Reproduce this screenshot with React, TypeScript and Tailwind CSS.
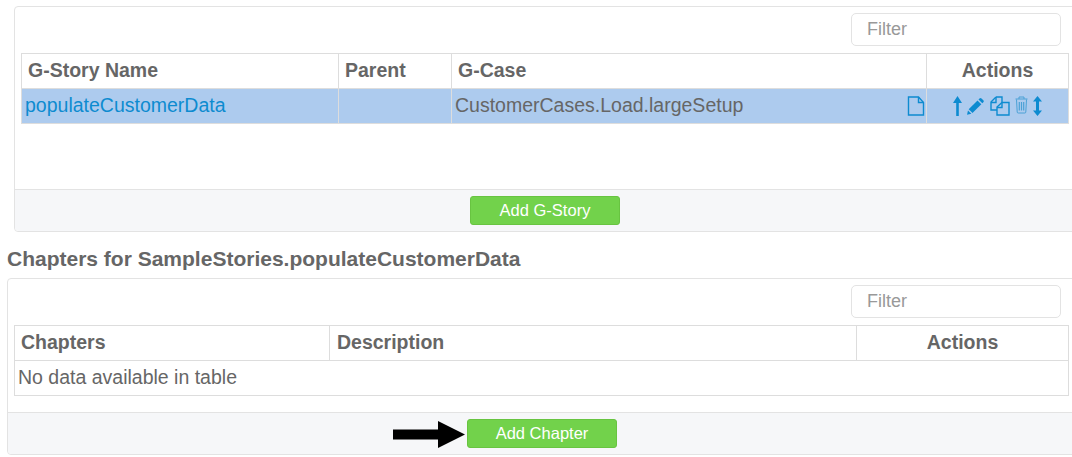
const headClass = 'border border-[#dddddd] px-[6px] pb-[1px] font-bold text-[19.5px] text-[#666666]';
const cellClass = 'border border-[#dddddd] pb-[1px] text-[19.5px]';

const FileIcon = () => (
  <svg width="18" height="20" viewBox="0 0 18 20" fill="none" stroke="#0d8bd0" strokeWidth="1.4">
    <path d="M1.500 1h10l5 5.500v12.500h-15z" />
    <path d="M11.500 1v5.500h5" />
  </svg>
);

const ArrowUpIcon = () => (
  <svg width="9" height="20" viewBox="0 0 9 20" fill="#0d8bd0">
    <path d="M4.500 0l4.500 7h-3.200v13h-2.600v-13h-3.200z" />
  </svg>
);

const PencilIcon = () => (
  <svg width="17" height="18" viewBox="0 0 17 18" fill="#0d8bd0">
    <path d="M11.500 2.500l1-1q1-1 2-0l1.800 1.800q1 1 0 2l-1 1z" />
    <path d="M10.500 3.500l3.800 3.800-8.800 8.800-3.800-3.800z" />
    <path d="M1 13.500l3.300 3.300-4.300 1z" />
  </svg>
);

const CopyIcon = () => (
  <svg width="20" height="20" viewBox="0 0 20 20" fill="none" stroke="#0d8bd0" strokeWidth="1.400">
    <path d="M6 1h6v5M6 1l-5 5v8h6" />
    <path d="M1 6.500h5v-5.500" />
    <path d="M12 6.500h7v12.500h-12v-8z" />
    <path d="M12 6.500v5h-5" />
  </svg>
);

const TrashIcon = () => (
  <svg width="13" height="20" viewBox="0 0 13 20" fill="none" stroke="#4aa1d6" strokeWidth="1">
    <path d="M0.500 3h12M4 3v-2h5v2" />
    <path d="M1.500 3.500l0.700 12.500q0 1 1 1h6.600q1 0 1-1l0.700-12.500" />
    <path d="M4.300 6v8.500M6.500 6v8.500M8.700 6v8.500" strokeWidth="1.200" />
  </svg>
);

const UpDownIcon = () => (
  <svg width="9" height="20" viewBox="0 0 9 20" fill="#0d8bd0">
    <path d="M4.500 0l4.500 5.500h-3v9h3l-4.500 5.500-4.500-5.500h3v-9h-3z" />
  </svg>
);

const FilterBar = () => (
  <div className="flex justify-end pt-[6px] pr-[14px] pb-[7px]">
    <input
      placeholder="Filter"
      className="h-[33px] w-[210px] rounded-[5px] border border-[#e3e3e3] bg-white px-[15px] text-[18px] outline-none placeholder:text-[#999999]"
    />
  </div>
);

const Footer = ({ label, arrow }: { label: string; arrow?: boolean }) => (
  <div className="flex h-[42px] items-center justify-center rounded-b-[4px] border-t border-[#e3e3e3] bg-[#f6f7f9]">
    <button className="relative h-[29px] w-[150px] rounded-[3px] border border-[#68c441] bg-[#72d24b] text-[16.5px] text-white">
      {label}
      {arrow && (
        <svg className="absolute top-[1px] left-[-75px]" width="73" height="27" viewBox="0 0 73 27" fill="#000000">
          <path d="M0 8.500h45v-8.500l27 13.500-27 13.500v-8.500h-45z" />
        </svg>
      )}
    </button>
  </div>
);

export default function App() {
  return (
    <div className="h-[457px] w-[1072px] overflow-hidden bg-white font-['Liberation_Sans',Arial,sans-serif]">
      <div className="pt-[6px] pl-[14px]">
        <div className="mr-[-4px] rounded-[4px] border border-[#e3e3e3]">
          <FilterBar />
          <div className="h-[136px] pl-[6px]">
            <table className="w-[1047px] table-fixed border-collapse">
              <colgroup>
                <col className="w-[317px]" />
                <col className="w-[113px]" />
                <col className="w-[475px]" />
                <col className="w-[142px]" />
              </colgroup>
              <thead>
                <tr className="h-[35px]">
                  <th className={headClass + ' text-left'}>G-Story Name</th>
                  <th className={headClass + ' text-left'}>Parent</th>
                  <th className={headClass + ' text-left'}>G-Case</th>
                  <th className={headClass + ' text-center'}>Actions</th>
                </tr>
              </thead>
              <tbody>
                <tr className="h-[35px] bg-[#adcbee]">
                  <td className={cellClass + ' pl-[3px] text-[#0d8bd0]'}>populateCustomerData</td>
                  <td className={cellClass}></td>
                  <td className={cellClass + ' pr-[1px] pl-[3px] text-[#666666]'}>
                    <div className="flex items-center justify-between">
                      <span>CustomerCases.Load.largeSetup</span>
                      <FileIcon />
                    </div>
                  </td>
                  <td className={cellClass}>
                    <div className="flex items-center justify-center gap-[5px]">
                      <ArrowUpIcon />
                      <PencilIcon />
                      <span className="ml-[1px] flex">
                        <CopyIcon />
                      </span>
                      <TrashIcon />
                      <UpDownIcon />
                    </div>
                  </td>
                </tr>
              </tbody>
            </table>
          </div>
          <Footer label="Add G-Story" />
        </div>
      </div>

      <h4 className="mt-[15px] mb-[8px] pl-[7px] text-[21px] leading-[23px] font-bold text-[#666666]">
        Chapters for SampleStories.populateCustomerData
      </h4>

      <div className="pl-[7px]">
        <div className="mr-[-5px] rounded-[4px] border border-[#e3e3e3]">
          <div className="pr-[1px]">
            <FilterBar />
          </div>
          <div className="h-[87px] pl-[6px]">
            <table className="w-[1054px] table-fixed border-collapse">
              <colgroup>
                <col className="w-[315px]" />
                <col className="w-[527px]" />
                <col className="w-[212px]" />
              </colgroup>
              <thead>
                <tr className="h-[35px]">
                  <th className={headClass + ' text-left'}>Chapters</th>
                  <th className={headClass + ' pl-[7px] text-left'}>Description</th>
                  <th className={headClass + ' text-center'}>Actions</th>
                </tr>
              </thead>
              <tbody>
                <tr className="h-[35px]">
                  <td colSpan={3} className={cellClass + ' pl-[3px] text-[#666666]'}>No data available in table</td>
                </tr>
              </tbody>
            </table>
          </div>
          <Footer label="Add Chapter" arrow />
        </div>
      </div>
    </div>
  );
}
